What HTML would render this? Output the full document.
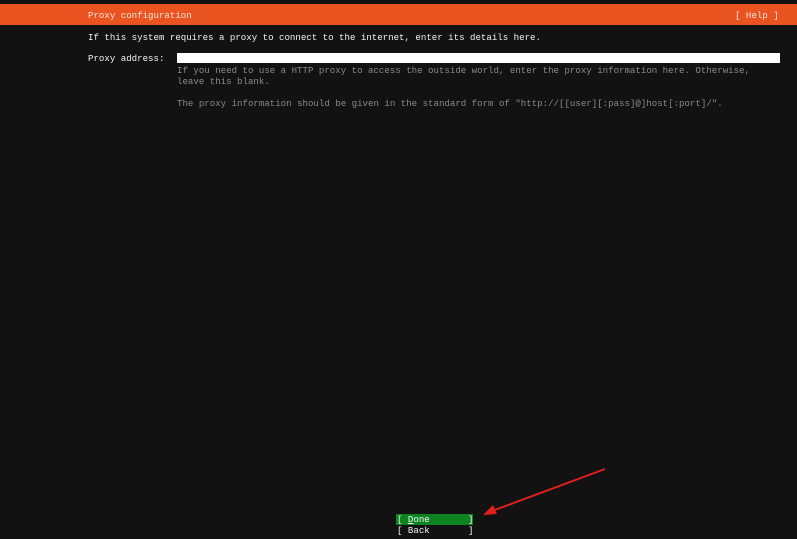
<!DOCTYPE html>
<html><head><style>
body{margin:0;width:797px;height:539px;background:#121212;position:relative;overflow:hidden;font-family:"Liberation Mono",monospace;font-size:9.1px;color:#f2f2f2;}
.t{position:absolute;white-space:pre;line-height:11px;}
.g{color:#8a8a8a}
</style></head><body>
<div style="position:absolute;left:0;top:4px;width:797px;height:21px;background:#e95420"></div>
<div class="t" style="left:88px;top:10px;color:#fbe3d9">Proxy configuration</div>
<div class="t" style="left:735px;top:10px;color:#fbe3d9">[ Help ]</div>
<div class="t" style="left:88px;top:32px">If this system requires a proxy to connect to the internet, enter its details here.</div>
<div class="t" style="left:88px;top:53px">Proxy address:</div>
<div style="position:absolute;left:177px;top:53px;width:603px;height:10px;background:#fff"></div>
<div class="t g" style="left:177px;top:65px">If you need to use a HTTP proxy to access the outside world, enter the proxy information here. Otherwise,
leave this blank.

The proxy information should be given in the standard form of "http://[[user][:pass]@]host[:port]/".</div>
<div style="position:absolute;left:396px;top:514px;width:77px;height:11px;background:#0e8420"></div>
<div class="t" style="left:397px;top:514px">[ <u>D</u>one       ]</div>
<div class="t" style="left:397px;top:525px">[ Back       ]</div>
<svg style="position:absolute;left:0;top:0" width="797" height="539"><line x1="605" y1="469" x2="492" y2="511" stroke="#e0201a" stroke-width="2"/><polygon points="483,515 493,505 497,514" fill="#e0201a"/></svg>
</body></html>
